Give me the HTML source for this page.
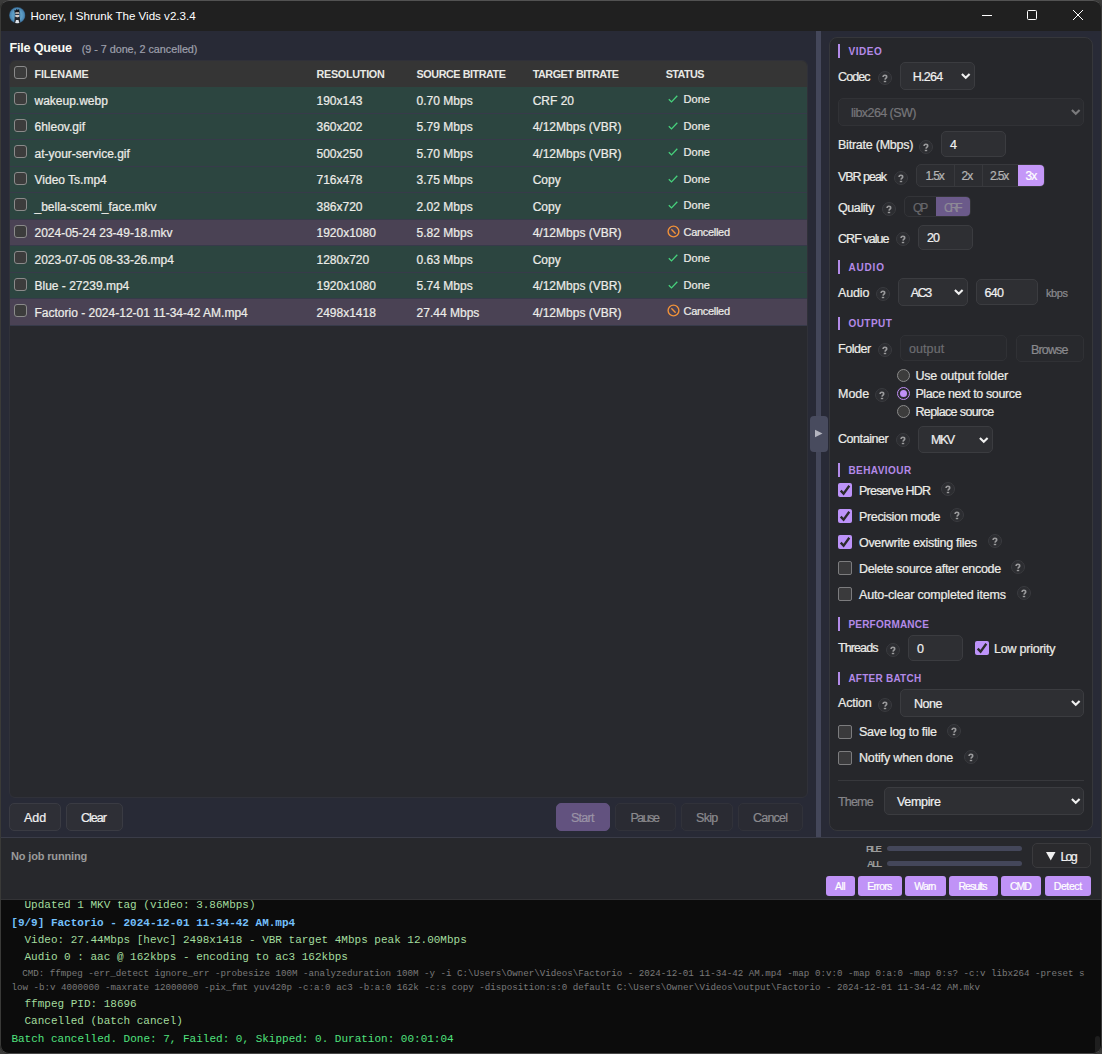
<!DOCTYPE html>
<html><head><meta charset="utf-8">
<style>
*{box-sizing:border-box;margin:0;padding:0}
html,body{width:1102px;height:1054px;overflow:hidden;background:#3b3b39;font-family:"Liberation Sans",sans-serif;}
.a{position:absolute}
.t{position:absolute;white-space:nowrap;line-height:1}
.s{-webkit-text-stroke:0.22px currentColor}
#win{position:absolute;left:0;top:0;width:1102px;height:1054px;background:#282a36}
#frame{position:absolute;left:0;top:0;width:1102px;height:1054px;border:1px solid #3a3a38;border-top-color:#525252;border-bottom-color:#474747;border-radius:9px;box-shadow:0 0 0 30px #3b3b3a;z-index:100;pointer-events:none}
.cb{position:absolute;width:13px;height:13px;border:1px solid #8a8a8a;border-radius:3px;background:#3c3c3c}
.q{position:absolute;width:14px;height:14px;border:1px solid #38393d;border-radius:50%;background:#2a2b2f;color:#8c8c8c;font-size:9px;font-weight:bold;display:flex;align-items:center;justify-content:center;line-height:1}
.box{position:absolute;border:1px solid #3b3c40;border-radius:5px;background:#2e2f33}
</style></head><body>
<div id="win">
<div class="a" style="left:0;top:0;width:1102px;height:31px;background:#202020"></div>
<svg class="a" style="left:9px;top:7px" width="16.5" height="16.5" viewBox="0 0 16 16"><defs><radialGradient id="ib" cx="50%" cy="50%" r="50%"><stop offset="0" stop-color="#3f7399"/><stop offset="0.55" stop-color="#5f9fc6"/><stop offset="0.85" stop-color="#4a86b2"/><stop offset="1" stop-color="#2a4a66"/></radialGradient><clipPath id="ic"><circle cx="8" cy="8" r="8"/></clipPath></defs><g clip-path="url(#ic)"><rect width="16" height="16" fill="url(#ib)"/><path d="M5.6 6L5.2 2.6L6.6 3.4L7.4 1.6L8.4 3L9.8 2L10.4 6Z" fill="#14161a"/><path d="M6.2 5.2H9.8V9.6L8 10.4L6.2 9.6Z" fill="#d9ccc4"/><rect x="5.9" y="6.6" width="4.2" height="1.1" fill="#1c2a3c"/><path d="M5.6 9.2L8 10.2L10.4 9.2L11 16H5Z" fill="#24262b"/><path d="M6.8 12.6H9.2L10.2 16H5.8Z" fill="#dfe4ea"/></g></svg>
<div class="t s" style="left:30.40px;top:10.28px;font-size:11.6px;color:#ffffff;font-weight:normal;letter-spacing:-0.013px;-webkit-text-stroke:0;">Honey, I Shrunk The Vids v2.3.4</div>
<div class="a" style="left:982px;top:15px;width:10px;height:1px;background:#fff"></div>
<div class="a" style="left:1027px;top:10px;width:10px;height:10px;border:1px solid #fff;border-radius:1.5px"></div>
<svg class="a" style="left:1072px;top:9px" width="12" height="12" viewBox="0 0 12 12"><path d="M1 1L11 11M11 1L1 11" stroke="#fff" stroke-width="1"/></svg>
<div class="t" style="left:9.40px;top:42.43px;font-size:12.6px;color:#f8f8f2;font-weight:bold;letter-spacing:-0.189px;">File Queue</div>
<div class="t s" style="left:81.70px;top:43.96px;font-size:10.8px;color:#9d9fab;font-weight:normal;letter-spacing:-0.029px;">(9 - 7 done, 2 cancelled)</div>
<div class="a" style="left:9px;top:60px;width:799px;height:738px;background:#28292e;border:1px solid #303139;border-radius:6px;overflow:hidden">
<div class="a" style="left:0;top:0;width:797px;height:26px;background:#353535"></div>
<div class="a" style="left:0;top:26px;width:797px;height:1px;background:#2a2a2a"></div>
</div>
<div class="cb" style="left:14px;top:66px"></div>
<div class="t" style="left:34.50px;top:68.96px;font-size:10.8px;color:#e8e8e4;font-weight:bold;letter-spacing:-0.143px;">FILENAME</div>
<div class="t" style="left:316.50px;top:68.96px;font-size:10.8px;color:#e8e8e4;font-weight:bold;letter-spacing:-0.278px;">RESOLUTION</div>
<div class="t" style="left:416.60px;top:68.96px;font-size:10.8px;color:#e8e8e4;font-weight:bold;letter-spacing:-0.446px;">SOURCE BITRATE</div>
<div class="t" style="left:532.70px;top:68.96px;font-size:10.8px;color:#e8e8e4;font-weight:bold;letter-spacing:-0.477px;">TARGET BITRATE</div>
<div class="t" style="left:665.70px;top:68.96px;font-size:10.8px;color:#e8e8e4;font-weight:bold;letter-spacing:-0.540px;">STATUS</div>
<div class="a" style="left:10px;top:87.0px;width:797px;height:26.5px;background:#2c4540;border-bottom:1px solid #373a4a"></div>
<div class="cb" style="left:14px;top:92.0px"></div>
<div class="t s" style="left:34.50px;top:94.94px;font-size:12px;color:#ecece8;font-weight:normal;">wakeup.webp</div>
<div class="t s" style="left:316.50px;top:94.94px;font-size:12px;color:#ecece8;font-weight:normal;">190x143</div>
<div class="t s" style="left:416.60px;top:94.94px;font-size:12px;color:#ecece8;font-weight:normal;">0.70 Mbps</div>
<div class="t s" style="left:532.70px;top:94.94px;font-size:12px;color:#ecece8;font-weight:normal;">CRF 20</div>
<svg class="a" style="left:668px;top:95.1px" width="10" height="8" viewBox="0 0 10 8"><path d="M0.8 4.2L3.5 6.9L9.3 0.8" fill="none" stroke="#47d27c" stroke-width="1.3"/></svg>
<div class="t s" style="left:683.60px;top:93.79px;font-size:11px;color:#ecece8;font-weight:normal;letter-spacing:0.000px;">Done</div>
<div class="a" style="left:10px;top:113.5px;width:797px;height:26.5px;background:#2c4540;border-bottom:1px solid #373a4a"></div>
<div class="cb" style="left:14px;top:118.5px"></div>
<div class="t s" style="left:34.50px;top:120.94px;font-size:12px;color:#ecece8;font-weight:normal;">6hleov.gif</div>
<div class="t s" style="left:316.50px;top:120.94px;font-size:12px;color:#ecece8;font-weight:normal;">360x202</div>
<div class="t s" style="left:416.60px;top:120.94px;font-size:12px;color:#ecece8;font-weight:normal;">5.79 Mbps</div>
<div class="t s" style="left:532.70px;top:120.94px;font-size:12px;color:#ecece8;font-weight:normal;">4/12Mbps (VBR)</div>
<svg class="a" style="left:668px;top:121.6px" width="10" height="8" viewBox="0 0 10 8"><path d="M0.8 4.2L3.5 6.9L9.3 0.8" fill="none" stroke="#47d27c" stroke-width="1.3"/></svg>
<div class="t s" style="left:683.60px;top:120.79px;font-size:11px;color:#ecece8;font-weight:normal;letter-spacing:0.000px;">Done</div>
<div class="a" style="left:10px;top:140.0px;width:797px;height:26.5px;background:#2c4540;border-bottom:1px solid #373a4a"></div>
<div class="cb" style="left:14px;top:145.0px"></div>
<div class="t s" style="left:34.50px;top:147.94px;font-size:12px;color:#ecece8;font-weight:normal;">at-your-service.gif</div>
<div class="t s" style="left:316.50px;top:147.94px;font-size:12px;color:#ecece8;font-weight:normal;">500x250</div>
<div class="t s" style="left:416.60px;top:147.94px;font-size:12px;color:#ecece8;font-weight:normal;">5.70 Mbps</div>
<div class="t s" style="left:532.70px;top:147.94px;font-size:12px;color:#ecece8;font-weight:normal;">4/12Mbps (VBR)</div>
<svg class="a" style="left:668px;top:148.1px" width="10" height="8" viewBox="0 0 10 8"><path d="M0.8 4.2L3.5 6.9L9.3 0.8" fill="none" stroke="#47d27c" stroke-width="1.3"/></svg>
<div class="t s" style="left:683.60px;top:146.79px;font-size:11px;color:#ecece8;font-weight:normal;letter-spacing:0.000px;">Done</div>
<div class="a" style="left:10px;top:166.5px;width:797px;height:26.5px;background:#2c4540;border-bottom:1px solid #373a4a"></div>
<div class="cb" style="left:14px;top:171.5px"></div>
<div class="t s" style="left:34.50px;top:173.94px;font-size:12px;color:#ecece8;font-weight:normal;">Video Ts.mp4</div>
<div class="t s" style="left:316.50px;top:173.94px;font-size:12px;color:#ecece8;font-weight:normal;">716x478</div>
<div class="t s" style="left:416.60px;top:173.94px;font-size:12px;color:#ecece8;font-weight:normal;">3.75 Mbps</div>
<div class="t s" style="left:532.70px;top:173.94px;font-size:12px;color:#ecece8;font-weight:normal;">Copy</div>
<svg class="a" style="left:668px;top:174.6px" width="10" height="8" viewBox="0 0 10 8"><path d="M0.8 4.2L3.5 6.9L9.3 0.8" fill="none" stroke="#47d27c" stroke-width="1.3"/></svg>
<div class="t s" style="left:683.60px;top:173.79px;font-size:11px;color:#ecece8;font-weight:normal;letter-spacing:0.000px;">Done</div>
<div class="a" style="left:10px;top:193.0px;width:797px;height:26.5px;background:#2c4540;border-bottom:1px solid #373a4a"></div>
<div class="cb" style="left:14px;top:198.0px"></div>
<div class="t s" style="left:34.50px;top:200.94px;font-size:12px;color:#ecece8;font-weight:normal;">_bella-scemi_face.mkv</div>
<div class="t s" style="left:316.50px;top:200.94px;font-size:12px;color:#ecece8;font-weight:normal;">386x720</div>
<div class="t s" style="left:416.60px;top:200.94px;font-size:12px;color:#ecece8;font-weight:normal;">2.02 Mbps</div>
<div class="t s" style="left:532.70px;top:200.94px;font-size:12px;color:#ecece8;font-weight:normal;">Copy</div>
<svg class="a" style="left:668px;top:201.1px" width="10" height="8" viewBox="0 0 10 8"><path d="M0.8 4.2L3.5 6.9L9.3 0.8" fill="none" stroke="#47d27c" stroke-width="1.3"/></svg>
<div class="t s" style="left:683.60px;top:199.79px;font-size:11px;color:#ecece8;font-weight:normal;letter-spacing:0.000px;">Done</div>
<div class="a" style="left:10px;top:219.5px;width:797px;height:26.5px;background:#4a4254;border-bottom:1px solid #373a4a"></div>
<div class="cb" style="left:14px;top:224.5px"></div>
<div class="t s" style="left:34.50px;top:226.94px;font-size:12px;color:#ecece8;font-weight:normal;">2024-05-24 23-49-18.mkv</div>
<div class="t s" style="left:316.50px;top:226.94px;font-size:12px;color:#ecece8;font-weight:normal;">1920x1080</div>
<div class="t s" style="left:416.60px;top:226.94px;font-size:12px;color:#ecece8;font-weight:normal;">5.82 Mbps</div>
<div class="t s" style="left:532.70px;top:226.94px;font-size:12px;color:#ecece8;font-weight:normal;">4/12Mbps (VBR)</div>
<svg class="a" style="left:666.5px;top:224.6px" width="13" height="13" viewBox="0 0 13 13"><circle cx="6.5" cy="6.5" r="5.4" fill="none" stroke="#f0923a" stroke-width="1.4"/><path d="M4.8 4.8L8.2 8.2" stroke="#f0923a" stroke-width="1.4" stroke-linecap="round"/></svg>
<div class="t s" style="left:683.60px;top:226.79px;font-size:11px;color:#ecece8;font-weight:normal;letter-spacing:-0.312px;">Cancelled</div>
<div class="a" style="left:10px;top:246.0px;width:797px;height:26.5px;background:#2c4540;border-bottom:1px solid #373a4a"></div>
<div class="cb" style="left:14px;top:251.0px"></div>
<div class="t s" style="left:34.50px;top:253.94px;font-size:12px;color:#ecece8;font-weight:normal;">2023-07-05 08-33-26.mp4</div>
<div class="t s" style="left:316.50px;top:253.94px;font-size:12px;color:#ecece8;font-weight:normal;">1280x720</div>
<div class="t s" style="left:416.60px;top:253.94px;font-size:12px;color:#ecece8;font-weight:normal;">0.63 Mbps</div>
<div class="t s" style="left:532.70px;top:253.94px;font-size:12px;color:#ecece8;font-weight:normal;">Copy</div>
<svg class="a" style="left:668px;top:254.1px" width="10" height="8" viewBox="0 0 10 8"><path d="M0.8 4.2L3.5 6.9L9.3 0.8" fill="none" stroke="#47d27c" stroke-width="1.3"/></svg>
<div class="t s" style="left:683.60px;top:252.79px;font-size:11px;color:#ecece8;font-weight:normal;letter-spacing:0.000px;">Done</div>
<div class="a" style="left:10px;top:272.5px;width:797px;height:26.5px;background:#2c4540;border-bottom:1px solid #373a4a"></div>
<div class="cb" style="left:14px;top:277.5px"></div>
<div class="t s" style="left:34.50px;top:279.94px;font-size:12px;color:#ecece8;font-weight:normal;">Blue - 27239.mp4</div>
<div class="t s" style="left:316.50px;top:279.94px;font-size:12px;color:#ecece8;font-weight:normal;">1920x1080</div>
<div class="t s" style="left:416.60px;top:279.94px;font-size:12px;color:#ecece8;font-weight:normal;">5.74 Mbps</div>
<div class="t s" style="left:532.70px;top:279.94px;font-size:12px;color:#ecece8;font-weight:normal;">4/12Mbps (VBR)</div>
<svg class="a" style="left:668px;top:280.6px" width="10" height="8" viewBox="0 0 10 8"><path d="M0.8 4.2L3.5 6.9L9.3 0.8" fill="none" stroke="#47d27c" stroke-width="1.3"/></svg>
<div class="t s" style="left:683.60px;top:279.79px;font-size:11px;color:#ecece8;font-weight:normal;letter-spacing:0.000px;">Done</div>
<div class="a" style="left:10px;top:299.0px;width:797px;height:26.5px;background:#4a4254;border-bottom:1px solid #373a4a"></div>
<div class="cb" style="left:14px;top:304.0px"></div>
<div class="t s" style="left:34.50px;top:306.94px;font-size:12px;color:#ecece8;font-weight:normal;">Factorio - 2024-12-01 11-34-42 AM.mp4</div>
<div class="t s" style="left:316.50px;top:306.94px;font-size:12px;color:#ecece8;font-weight:normal;">2498x1418</div>
<div class="t s" style="left:416.60px;top:306.94px;font-size:12px;color:#ecece8;font-weight:normal;">27.44 Mbps</div>
<div class="t s" style="left:532.70px;top:306.94px;font-size:12px;color:#ecece8;font-weight:normal;">4/12Mbps (VBR)</div>
<svg class="a" style="left:666.5px;top:304.1px" width="13" height="13" viewBox="0 0 13 13"><circle cx="6.5" cy="6.5" r="5.4" fill="none" stroke="#f0923a" stroke-width="1.4"/><path d="M4.8 4.8L8.2 8.2" stroke="#f0923a" stroke-width="1.4" stroke-linecap="round"/></svg>
<div class="t s" style="left:683.60px;top:305.79px;font-size:11px;color:#ecece8;font-weight:normal;letter-spacing:-0.312px;">Cancelled</div>
<div class="a" style="left:9px;top:803px;width:52px;height:28px;background:#2e2f36;border:1px solid #3a3b43;border-radius:5px"></div>
<div class="t s" style="left:24.00px;top:811.52px;font-size:12.5px;color:#f0f0f0;font-weight:normal;letter-spacing:0.000px;">Add</div>
<div class="a" style="left:66px;top:803px;width:57px;height:28px;background:#2e2f36;border:1px solid #3a3b43;border-radius:5px"></div>
<div class="t s" style="left:81.00px;top:811.52px;font-size:12.5px;color:#f0f0f0;font-weight:normal;letter-spacing:-1.000px;">Clear</div>
<div class="a" style="left:556px;top:803px;width:54px;height:28px;background:#62527f;border:1px solid #62527f;border-radius:5px"></div>
<div class="t s" style="left:571.00px;top:811.52px;font-size:12.5px;color:#9a93a6;font-weight:normal;letter-spacing:-0.750px;">Start</div>
<div class="a" style="left:615px;top:803px;width:61px;height:28px;background:#2a2b33;border:1px solid #31323a;border-radius:5px"></div>
<div class="t s" style="left:630.50px;top:811.52px;font-size:12.5px;color:#8a8a8e;font-weight:normal;letter-spacing:-1.500px;">Pause</div>
<div class="a" style="left:681px;top:803px;width:52px;height:28px;background:#2a2b33;border:1px solid #31323a;border-radius:5px"></div>
<div class="t s" style="left:696.00px;top:811.52px;font-size:12.5px;color:#8a8a8e;font-weight:normal;letter-spacing:-0.667px;">Skip</div>
<div class="a" style="left:738px;top:803px;width:65px;height:28px;background:#2a2b33;border:1px solid #31323a;border-radius:5px"></div>
<div class="t s" style="left:753.00px;top:811.52px;font-size:12.5px;color:#8a8a8e;font-weight:normal;letter-spacing:-0.800px;">Cancel</div>
<div class="a" style="left:816px;top:31px;width:5px;height:806px;background:#44475a"></div>
<div class="a" style="left:810px;top:416px;width:18px;height:36px;background:#484b5e;border-radius:4px"></div>
<svg class="a" style="left:814px;top:428px" width="10" height="11" viewBox="0 0 10 11"><path d="M1 1.8L8.5 5.5L1 9.2Z" fill="#b4b5c0"/></svg>
<div class="a" style="left:829px;top:37px;width:264px;height:794px;background:#26272b;border:1px solid #36373b;border-radius:8px"></div>
<div class="a" style="left:838px;top:44px;width:2px;height:14px;background:#b38be9"></div>
<div class="t" style="left:848.40px;top:46.64px;font-size:10px;color:#b48ae8;font-weight:bold;letter-spacing:0.575px;">VIDEO</div>
<div class="t s" style="left:838.00px;top:70.52px;font-size:12.5px;color:#ecece8;font-weight:normal;letter-spacing:-0.900px;">Codec</div>
<svg class="a" style="left:878px;top:71px" width="14" height="14" viewBox="0 0 14 14"><circle cx="7" cy="7" r="6.5" fill="#2c2d31" stroke="#3a3b3f" stroke-width="1"/><path d="M5.1 6C5.1 4.8 5.9 4.3 6.9 4.3C8 4.3 8.7 5 8.7 5.9C8.7 7.1 7.2 7.2 7 8.7" fill="none" stroke="#9a9a9c" stroke-width="1.6"/><rect x="5.8" y="9.8" width="2.4" height="1.4" fill="#9a9a9c"/></svg>
<div class="box" style="left:900px;top:62px;width:75px;height:28px;"></div>
<div class="t s" style="left:912.80px;top:70.52px;font-size:12.5px;color:#f0f0f0;font-weight:normal;letter-spacing:-0.750px;">H.264</div>
<svg class="a" style="left:960px;top:72px" width="11.5" height="7.6" viewBox="-1 -1 11.5 7.6"><path d="M0.9 0.9L4.75 4.699999999999999L8.6 0.9" fill="none" stroke="#f0f0f0" stroke-width="2.1" stroke-linecap="butt" stroke-linejoin="miter"/></svg>
<div class="box" style="left:838px;top:98px;width:246px;height:28px;background:#2a2b2f;border-color:#313236"></div>
<div class="t s" style="left:851.00px;top:106.52px;font-size:12.5px;color:#76767a;font-weight:normal;letter-spacing:-0.564px;">libx264 (SW)</div>
<svg class="a" style="left:1069.5px;top:108px" width="11.5" height="7.6" viewBox="-1 -1 11.5 7.6"><path d="M0.9 0.9L4.75 4.699999999999999L8.6 0.9" fill="none" stroke="#7a7a7c" stroke-width="2.1" stroke-linecap="butt" stroke-linejoin="miter"/></svg>
<div class="t s" style="left:838.00px;top:138.52px;font-size:12.5px;color:#ecece8;font-weight:normal;letter-spacing:-0.231px;">Bitrate (Mbps)</div>
<svg class="a" style="left:919px;top:140px" width="14" height="14" viewBox="0 0 14 14"><circle cx="7" cy="7" r="6.5" fill="#2c2d31" stroke="#3a3b3f" stroke-width="1"/><path d="M5.1 6C5.1 4.8 5.9 4.3 6.9 4.3C8 4.3 8.7 5 8.7 5.9C8.7 7.1 7.2 7.2 7 8.7" fill="none" stroke="#9a9a9c" stroke-width="1.6"/><rect x="5.8" y="9.8" width="2.4" height="1.4" fill="#9a9a9c"/></svg>
<div class="box" style="left:941px;top:131px;width:65px;height:26px;"></div>
<div class="t s" style="left:950.00px;top:138.52px;font-size:12.5px;color:#f0f0f0;font-weight:normal;">4</div>
<div class="t s" style="left:838.00px;top:170.52px;font-size:12.5px;color:#ecece8;font-weight:normal;letter-spacing:-1.029px;">VBR peak</div>
<svg class="a" style="left:894px;top:171px" width="14" height="14" viewBox="0 0 14 14"><circle cx="7" cy="7" r="6.5" fill="#2c2d31" stroke="#3a3b3f" stroke-width="1"/><path d="M5.1 6C5.1 4.8 5.9 4.3 6.9 4.3C8 4.3 8.7 5 8.7 5.9C8.7 7.1 7.2 7.2 7 8.7" fill="none" stroke="#9a9a9c" stroke-width="1.6"/><rect x="5.8" y="9.8" width="2.4" height="1.4" fill="#9a9a9c"/></svg>
<div class="box" style="left:916px;top:164px;width:129px;height:22.5px;background:#2c2d31;border-color:#38393d;overflow:hidden"><div class="a" style="left:36.5px;top:0;width:1px;height:22px;background:#38393d"></div><div class="a" style="left:64.5px;top:0;width:1px;height:22px;background:#38393d"></div><div class="a" style="left:101px;top:-1px;width:28px;height:24px;background:#c497f8;border-radius:0 5px 5px 0"></div></div>
<div class="t s" style="left:925.50px;top:169.94px;font-size:12px;color:#b4b4b4;font-weight:normal;letter-spacing:-1.167px;">1.5x</div>
<div class="t s" style="left:961.50px;top:169.94px;font-size:12px;color:#b4b4b4;font-weight:normal;letter-spacing:-1.000px;">2x</div>
<div class="t s" style="left:990.00px;top:169.94px;font-size:12px;color:#b4b4b4;font-weight:normal;letter-spacing:-1.167px;">2.5x</div>
<div class="t s" style="left:1025.50px;top:169.94px;font-size:12px;color:#ffffff;font-weight:normal;letter-spacing:-1.000px;">3x</div>
<div class="t s" style="left:838.00px;top:201.52px;font-size:12.5px;color:#ecece8;font-weight:normal;letter-spacing:-0.417px;">Quality</div>
<svg class="a" style="left:882px;top:202px" width="14" height="14" viewBox="0 0 14 14"><circle cx="7" cy="7" r="6.5" fill="#2c2d31" stroke="#3a3b3f" stroke-width="1"/><path d="M5.1 6C5.1 4.8 5.9 4.3 6.9 4.3C8 4.3 8.7 5 8.7 5.9C8.7 7.1 7.2 7.2 7 8.7" fill="none" stroke="#9a9a9c" stroke-width="1.6"/><rect x="5.8" y="9.8" width="2.4" height="1.4" fill="#9a9a9c"/></svg>
<div class="box" style="left:904px;top:195.5px;width:67px;height:21.5px;background:#27282c;border-color:#333438;overflow:hidden"><div class="a" style="left:31px;top:-1px;width:36px;height:23px;background:#6b5a8a"></div></div>
<div class="t s" style="left:913.00px;top:201.94px;font-size:12px;color:#67676b;font-weight:normal;letter-spacing:-2.000px;">QP</div>
<div class="t s" style="left:944.00px;top:201.94px;font-size:12px;color:#8e8a96;font-weight:normal;letter-spacing:-3.000px;">CRF</div>
<div class="t s" style="left:838.00px;top:232.52px;font-size:12.5px;color:#ecece8;font-weight:normal;letter-spacing:-0.938px;">CRF value</div>
<svg class="a" style="left:896px;top:232px" width="14" height="14" viewBox="0 0 14 14"><circle cx="7" cy="7" r="6.5" fill="#2c2d31" stroke="#3a3b3f" stroke-width="1"/><path d="M5.1 6C5.1 4.8 5.9 4.3 6.9 4.3C8 4.3 8.7 5 8.7 5.9C8.7 7.1 7.2 7.2 7 8.7" fill="none" stroke="#9a9a9c" stroke-width="1.6"/><rect x="5.8" y="9.8" width="2.4" height="1.4" fill="#9a9a9c"/></svg>
<div class="box" style="left:918px;top:224.5px;width:55px;height:25.0px;"></div>
<div class="t s" style="left:927.00px;top:231.52px;font-size:12.5px;color:#f0f0f0;font-weight:normal;letter-spacing:-1.000px;">20</div>
<div class="a" style="left:838px;top:260px;width:2px;height:13.5px;background:#b38be9"></div>
<div class="t" style="left:848.40px;top:262.64px;font-size:10px;color:#b48ae8;font-weight:bold;letter-spacing:0.850px;">AUDIO</div>
<div class="t s" style="left:838.00px;top:286.52px;font-size:12.5px;color:#ecece8;font-weight:normal;letter-spacing:-0.150px;">Audio</div>
<svg class="a" style="left:876px;top:287px" width="14" height="14" viewBox="0 0 14 14"><circle cx="7" cy="7" r="6.5" fill="#2c2d31" stroke="#3a3b3f" stroke-width="1"/><path d="M5.1 6C5.1 4.8 5.9 4.3 6.9 4.3C8 4.3 8.7 5 8.7 5.9C8.7 7.1 7.2 7.2 7 8.7" fill="none" stroke="#9a9a9c" stroke-width="1.6"/><rect x="5.8" y="9.8" width="2.4" height="1.4" fill="#9a9a9c"/></svg>
<div class="box" style="left:898px;top:278px;width:70px;height:28px;"></div>
<div class="t s" style="left:910.70px;top:286.52px;font-size:12.5px;color:#f0f0f0;font-weight:normal;letter-spacing:-1.350px;">AC3</div>
<svg class="a" style="left:953px;top:288px" width="11.5" height="7.6" viewBox="-1 -1 11.5 7.6"><path d="M0.9 0.9L4.75 4.699999999999999L8.6 0.9" fill="none" stroke="#f0f0f0" stroke-width="2.1" stroke-linecap="butt" stroke-linejoin="miter"/></svg>
<div class="box" style="left:976px;top:278.5px;width:62px;height:26.0px;"></div>
<div class="t s" style="left:984.50px;top:286.52px;font-size:12.5px;color:#f0f0f0;font-weight:normal;letter-spacing:-0.750px;">640</div>
<div class="t s" style="left:1046.00px;top:287.79px;font-size:11px;color:#8a8a8e;font-weight:normal;letter-spacing:-0.400px;">kbps</div>
<div class="a" style="left:838px;top:317px;width:2px;height:13px;background:#b38be9"></div>
<div class="t" style="left:848.40px;top:318.64px;font-size:10px;color:#b48ae8;font-weight:bold;letter-spacing:0.480px;">OUTPUT</div>
<div class="t s" style="left:838.00px;top:342.52px;font-size:12.5px;color:#ecece8;font-weight:normal;letter-spacing:-0.440px;">Folder</div>
<svg class="a" style="left:878px;top:343px" width="14" height="14" viewBox="0 0 14 14"><circle cx="7" cy="7" r="6.5" fill="#2c2d31" stroke="#3a3b3f" stroke-width="1"/><path d="M5.1 6C5.1 4.8 5.9 4.3 6.9 4.3C8 4.3 8.7 5 8.7 5.9C8.7 7.1 7.2 7.2 7 8.7" fill="none" stroke="#9a9a9c" stroke-width="1.6"/><rect x="5.8" y="9.8" width="2.4" height="1.4" fill="#9a9a9c"/></svg>
<div class="box" style="left:900px;top:335px;width:107px;height:25.5px;background:#28292d;border-color:#303135"></div>
<div class="t s" style="left:909.00px;top:342.52px;font-size:12.5px;color:#6c6c70;font-weight:normal;letter-spacing:0.080px;">output</div>
<div class="box" style="left:1016px;top:335px;width:68px;height:27px;background:#28292d;border-color:#303135"></div>
<div class="t s" style="left:1031.00px;top:343.52px;font-size:12.5px;color:#8a8a8e;font-weight:normal;letter-spacing:-0.840px;">Browse</div>
<div class="t s" style="left:838.00px;top:387.52px;font-size:12.5px;color:#ecece8;font-weight:normal;letter-spacing:0.000px;">Mode</div>
<svg class="a" style="left:875px;top:388px" width="14" height="14" viewBox="0 0 14 14"><circle cx="7" cy="7" r="6.5" fill="#2c2d31" stroke="#3a3b3f" stroke-width="1"/><path d="M5.1 6C5.1 4.8 5.9 4.3 6.9 4.3C8 4.3 8.7 5 8.7 5.9C8.7 7.1 7.2 7.2 7 8.7" fill="none" stroke="#9a9a9c" stroke-width="1.6"/><rect x="5.8" y="9.8" width="2.4" height="1.4" fill="#9a9a9c"/></svg>
<div class="a" style="left:897px;top:369px;width:13px;height:13px;border-radius:50%;border:1px solid #8a8a8a;background:#3c3c3c"></div>
<div class="t s" style="left:915.40px;top:369.52px;font-size:12.5px;color:#ecece8;font-weight:normal;letter-spacing:-0.156px;">Use output folder</div>
<div class="a" style="left:897px;top:387px;width:13px;height:13px;border-radius:50%;border:1px solid #c08ef7;background:#2a2a2e"></div>
<div class="a" style="left:900px;top:390px;width:7px;height:7px;border-radius:50%;background:#c090f8"></div>
<div class="t s" style="left:915.40px;top:387.52px;font-size:12.5px;color:#ecece8;font-weight:normal;letter-spacing:-0.368px;">Place next to source</div>
<div class="a" style="left:897px;top:405px;width:13px;height:13px;border-radius:50%;border:1px solid #8a8a8a;background:#3c3c3c"></div>
<div class="t s" style="left:915.40px;top:405.52px;font-size:12.5px;color:#ecece8;font-weight:normal;letter-spacing:-0.615px;">Replace source</div>
<div class="t s" style="left:838.00px;top:432.52px;font-size:12.5px;color:#ecece8;font-weight:normal;letter-spacing:-0.438px;">Container</div>
<svg class="a" style="left:896px;top:433px" width="14" height="14" viewBox="0 0 14 14"><circle cx="7" cy="7" r="6.5" fill="#2c2d31" stroke="#3a3b3f" stroke-width="1"/><path d="M5.1 6C5.1 4.8 5.9 4.3 6.9 4.3C8 4.3 8.7 5 8.7 5.9C8.7 7.1 7.2 7.2 7 8.7" fill="none" stroke="#9a9a9c" stroke-width="1.6"/><rect x="5.8" y="9.8" width="2.4" height="1.4" fill="#9a9a9c"/></svg>
<div class="box" style="left:918px;top:425.5px;width:75px;height:27.0px;"></div>
<div class="t s" style="left:931.00px;top:433.52px;font-size:12.5px;color:#f0f0f0;font-weight:normal;letter-spacing:-1.500px;">MKV</div>
<svg class="a" style="left:978px;top:436px" width="11.5" height="7.6" viewBox="-1 -1 11.5 7.6"><path d="M0.9 0.9L4.75 4.699999999999999L8.6 0.9" fill="none" stroke="#f0f0f0" stroke-width="2.1" stroke-linecap="butt" stroke-linejoin="miter"/></svg>
<div class="a" style="left:838px;top:463px;width:2px;height:14px;background:#b38be9"></div>
<div class="t" style="left:848.40px;top:465.64px;font-size:10px;color:#b48ae8;font-weight:bold;letter-spacing:0.438px;">BEHAVIOUR</div>
<div class="a" style="left:838px;top:483px;width:14px;height:14px;border-radius:2px;background:#bd93f9"></div>
<svg class="a" style="left:838px;top:483px" width="14" height="14" viewBox="0 0 14 14"><path d="M2.7 7.6L5.6 10.6L11.3 2.8" fill="none" stroke="#2b2b2b" stroke-width="2.3"/></svg>
<div class="t s" style="left:859.00px;top:484.52px;font-size:12.5px;color:#ecece8;font-weight:normal;letter-spacing:-0.773px;">Preserve HDR</div>
<svg class="a" style="left:941px;top:481.5px" width="14" height="14" viewBox="0 0 14 14"><circle cx="7" cy="7" r="6.5" fill="#2c2d31" stroke="#3a3b3f" stroke-width="1"/><path d="M5.1 6C5.1 4.8 5.9 4.3 6.9 4.3C8 4.3 8.7 5 8.7 5.9C8.7 7.1 7.2 7.2 7 8.7" fill="none" stroke="#9a9a9c" stroke-width="1.6"/><rect x="5.8" y="9.8" width="2.4" height="1.4" fill="#9a9a9c"/></svg>
<div class="a" style="left:838px;top:509px;width:14px;height:14px;border-radius:2px;background:#bd93f9"></div>
<svg class="a" style="left:838px;top:509px" width="14" height="14" viewBox="0 0 14 14"><path d="M2.7 7.6L5.6 10.6L11.3 2.8" fill="none" stroke="#2b2b2b" stroke-width="2.3"/></svg>
<div class="t s" style="left:859.00px;top:510.52px;font-size:12.5px;color:#ecece8;font-weight:normal;letter-spacing:-0.354px;">Precision mode</div>
<svg class="a" style="left:950px;top:507.5px" width="14" height="14" viewBox="0 0 14 14"><circle cx="7" cy="7" r="6.5" fill="#2c2d31" stroke="#3a3b3f" stroke-width="1"/><path d="M5.1 6C5.1 4.8 5.9 4.3 6.9 4.3C8 4.3 8.7 5 8.7 5.9C8.7 7.1 7.2 7.2 7 8.7" fill="none" stroke="#9a9a9c" stroke-width="1.6"/><rect x="5.8" y="9.8" width="2.4" height="1.4" fill="#9a9a9c"/></svg>
<div class="a" style="left:838px;top:535px;width:14px;height:14px;border-radius:2px;background:#bd93f9"></div>
<svg class="a" style="left:838px;top:535px" width="14" height="14" viewBox="0 0 14 14"><path d="M2.7 7.6L5.6 10.6L11.3 2.8" fill="none" stroke="#2b2b2b" stroke-width="2.3"/></svg>
<div class="t s" style="left:859.00px;top:536.52px;font-size:12.5px;color:#ecece8;font-weight:normal;letter-spacing:-0.304px;">Overwrite existing files</div>
<svg class="a" style="left:987.5px;top:533.5px" width="14" height="14" viewBox="0 0 14 14"><circle cx="7" cy="7" r="6.5" fill="#2c2d31" stroke="#3a3b3f" stroke-width="1"/><path d="M5.1 6C5.1 4.8 5.9 4.3 6.9 4.3C8 4.3 8.7 5 8.7 5.9C8.7 7.1 7.2 7.2 7 8.7" fill="none" stroke="#9a9a9c" stroke-width="1.6"/><rect x="5.8" y="9.8" width="2.4" height="1.4" fill="#9a9a9c"/></svg>
<div class="a" style="left:838px;top:561px;width:14px;height:14px;border-radius:2px;background:#3a3a3c;border:1px solid #7c7c7e"></div>
<div class="t s" style="left:859.00px;top:562.52px;font-size:12.5px;color:#ecece8;font-weight:normal;letter-spacing:-0.320px;">Delete source after encode</div>
<svg class="a" style="left:1011px;top:559.5px" width="14" height="14" viewBox="0 0 14 14"><circle cx="7" cy="7" r="6.5" fill="#2c2d31" stroke="#3a3b3f" stroke-width="1"/><path d="M5.1 6C5.1 4.8 5.9 4.3 6.9 4.3C8 4.3 8.7 5 8.7 5.9C8.7 7.1 7.2 7.2 7 8.7" fill="none" stroke="#9a9a9c" stroke-width="1.6"/><rect x="5.8" y="9.8" width="2.4" height="1.4" fill="#9a9a9c"/></svg>
<div class="a" style="left:838px;top:587px;width:14px;height:14px;border-radius:2px;background:#3a3a3c;border:1px solid #7c7c7e"></div>
<div class="t s" style="left:859.00px;top:588.52px;font-size:12.5px;color:#ecece8;font-weight:normal;letter-spacing:-0.180px;">Auto-clear completed items</div>
<svg class="a" style="left:1016.5px;top:585.5px" width="14" height="14" viewBox="0 0 14 14"><circle cx="7" cy="7" r="6.5" fill="#2c2d31" stroke="#3a3b3f" stroke-width="1"/><path d="M5.1 6C5.1 4.8 5.9 4.3 6.9 4.3C8 4.3 8.7 5 8.7 5.9C8.7 7.1 7.2 7.2 7 8.7" fill="none" stroke="#9a9a9c" stroke-width="1.6"/><rect x="5.8" y="9.8" width="2.4" height="1.4" fill="#9a9a9c"/></svg>
<div class="a" style="left:838px;top:617px;width:2px;height:13.5px;background:#b38be9"></div>
<div class="t" style="left:848.40px;top:619.63px;font-size:10px;color:#b48ae8;font-weight:bold;letter-spacing:0.220px;">PERFORMANCE</div>
<div class="t s" style="left:838.00px;top:641.52px;font-size:12.5px;color:#ecece8;font-weight:normal;letter-spacing:-0.900px;">Threads</div>
<svg class="a" style="left:886px;top:643px" width="14" height="14" viewBox="0 0 14 14"><circle cx="7" cy="7" r="6.5" fill="#2c2d31" stroke="#3a3b3f" stroke-width="1"/><path d="M5.1 6C5.1 4.8 5.9 4.3 6.9 4.3C8 4.3 8.7 5 8.7 5.9C8.7 7.1 7.2 7.2 7 8.7" fill="none" stroke="#9a9a9c" stroke-width="1.6"/><rect x="5.8" y="9.8" width="2.4" height="1.4" fill="#9a9a9c"/></svg>
<div class="box" style="left:908px;top:635px;width:55px;height:26px;"></div>
<div class="t s" style="left:917.00px;top:642.52px;font-size:12.5px;color:#f0f0f0;font-weight:normal;">0</div>
<div class="a" style="left:975px;top:641px;width:14px;height:14px;border-radius:2px;background:#bd93f9"></div>
<svg class="a" style="left:975px;top:641px" width="14" height="14" viewBox="0 0 14 14"><path d="M2.7 7.6L5.6 10.6L11.3 2.8" fill="none" stroke="#2b2b2b" stroke-width="2.3"/></svg>
<div class="t s" style="left:994.00px;top:642.52px;font-size:12.5px;color:#ecece8;font-weight:normal;letter-spacing:-0.227px;">Low priority</div>
<div class="a" style="left:838px;top:671.5px;width:2px;height:13.5px;background:#b38be9"></div>
<div class="t" style="left:848.40px;top:673.63px;font-size:10px;color:#b48ae8;font-weight:bold;letter-spacing:0.240px;">AFTER BATCH</div>
<div class="t s" style="left:838.00px;top:696.52px;font-size:12.5px;color:#ecece8;font-weight:normal;letter-spacing:-0.200px;">Action</div>
<svg class="a" style="left:878px;top:697.5px" width="14" height="14" viewBox="0 0 14 14"><circle cx="7" cy="7" r="6.5" fill="#2c2d31" stroke="#3a3b3f" stroke-width="1"/><path d="M5.1 6C5.1 4.8 5.9 4.3 6.9 4.3C8 4.3 8.7 5 8.7 5.9C8.7 7.1 7.2 7.2 7 8.7" fill="none" stroke="#9a9a9c" stroke-width="1.6"/><rect x="5.8" y="9.8" width="2.4" height="1.4" fill="#9a9a9c"/></svg>
<div class="box" style="left:900px;top:689px;width:184px;height:28px;"></div>
<div class="t s" style="left:914.00px;top:697.52px;font-size:12.5px;color:#f0f0f0;font-weight:normal;letter-spacing:-0.500px;">None</div>
<svg class="a" style="left:1069.5px;top:699px" width="11.5" height="7.6" viewBox="-1 -1 11.5 7.6"><path d="M0.9 0.9L4.75 4.699999999999999L8.6 0.9" fill="none" stroke="#f0f0f0" stroke-width="2.1" stroke-linecap="butt" stroke-linejoin="miter"/></svg>
<div class="a" style="left:838px;top:724.5px;width:14px;height:14px;border-radius:2px;background:#3a3a3c;border:1px solid #7c7c7e"></div>
<div class="t s" style="left:859.00px;top:725.52px;font-size:12.5px;color:#ecece8;font-weight:normal;letter-spacing:-0.267px;">Save log to file</div>
<svg class="a" style="left:947px;top:724.0px" width="14" height="14" viewBox="0 0 14 14"><circle cx="7" cy="7" r="6.5" fill="#2c2d31" stroke="#3a3b3f" stroke-width="1"/><path d="M5.1 6C5.1 4.8 5.9 4.3 6.9 4.3C8 4.3 8.7 5 8.7 5.9C8.7 7.1 7.2 7.2 7 8.7" fill="none" stroke="#9a9a9c" stroke-width="1.6"/><rect x="5.8" y="9.8" width="2.4" height="1.4" fill="#9a9a9c"/></svg>
<div class="a" style="left:838px;top:750.5px;width:14px;height:14px;border-radius:2px;background:#3a3a3c;border:1px solid #7c7c7e"></div>
<div class="t s" style="left:859.00px;top:751.52px;font-size:12.5px;color:#ecece8;font-weight:normal;letter-spacing:-0.160px;">Notify when done</div>
<svg class="a" style="left:964px;top:750.0px" width="14" height="14" viewBox="0 0 14 14"><circle cx="7" cy="7" r="6.5" fill="#2c2d31" stroke="#3a3b3f" stroke-width="1"/><path d="M5.1 6C5.1 4.8 5.9 4.3 6.9 4.3C8 4.3 8.7 5 8.7 5.9C8.7 7.1 7.2 7.2 7 8.7" fill="none" stroke="#9a9a9c" stroke-width="1.6"/><rect x="5.8" y="9.8" width="2.4" height="1.4" fill="#9a9a9c"/></svg>
<div class="a" style="left:838px;top:780px;width:246px;height:1px;background:#37383c"></div>
<div class="t s" style="left:838.00px;top:795.52px;font-size:12.5px;color:#858589;font-weight:normal;letter-spacing:-0.825px;">Theme</div>
<div class="box" style="left:884px;top:787px;width:200px;height:28px;"></div>
<div class="t s" style="left:897.00px;top:795.52px;font-size:12.5px;color:#f0f0f0;font-weight:normal;letter-spacing:-0.333px;">Vempire</div>
<svg class="a" style="left:1069.5px;top:797px" width="11.5" height="7.6" viewBox="-1 -1 11.5 7.6"><path d="M0.9 0.9L4.75 4.699999999999999L8.6 0.9" fill="none" stroke="#f0f0f0" stroke-width="2.1" stroke-linecap="butt" stroke-linejoin="miter"/></svg>
<div class="a" style="left:0;top:837px;width:1102px;height:63px;background:#27282c;border-top:1px solid #3a3c48"></div>
<div class="t" style="left:11.00px;top:850.79px;font-size:11px;color:#9a9a9a;font-weight:bold;letter-spacing:-0.154px;">No job running</div>
<div class="t" style="left:866.00px;top:843.97px;font-size:9.6px;color:#9c9c9c;font-weight:bold;letter-spacing:-1.667px;">FILE</div>
<div class="t" style="left:867.00px;top:858.97px;font-size:9.6px;color:#9c9c9c;font-weight:bold;letter-spacing:-1.750px;">ALL</div>
<div class="a" style="left:887px;top:846px;width:135px;height:5px;border-radius:3px;background:#44475a"></div>
<div class="a" style="left:887px;top:861px;width:135px;height:5px;border-radius:3px;background:#44475a"></div>
<div class="a" style="left:1032px;top:843px;width:59px;height:25px;background:#2a2a2d;border:1px solid #3a3a3d;border-radius:5px"></div>
<svg class="a" style="left:1045.5px;top:852px" width="10" height="9" viewBox="0 0 10 9"><path d="M0 0H9.5L4.75 8.5Z" fill="#f0f0f0"/></svg>
<div class="t s" style="left:1060.40px;top:850.52px;font-size:12.5px;color:#f0f0f0;font-weight:normal;letter-spacing:-1.750px;">Log</div>
<div class="a" style="left:826px;top:876px;width:29px;height:20px;background:#c093f7;border-radius:3px"></div>
<div class="t s" style="left:835.00px;top:881.21px;font-size:10.5px;color:#ffffff;font-weight:normal;letter-spacing:-0.500px;">All</div>
<div class="a" style="left:858px;top:876px;width:44px;height:20px;background:#c093f7;border-radius:3px"></div>
<div class="t s" style="left:867.25px;top:881.21px;font-size:10.5px;color:#ffffff;font-weight:normal;letter-spacing:-0.700px;">Errors</div>
<div class="a" style="left:905px;top:876px;width:41px;height:20px;background:#c093f7;border-radius:3px"></div>
<div class="t s" style="left:914.25px;top:881.21px;font-size:10.5px;color:#ffffff;font-weight:normal;letter-spacing:-0.833px;">Warn</div>
<div class="a" style="left:949px;top:876px;width:49px;height:20px;background:#c093f7;border-radius:3px"></div>
<div class="t s" style="left:958.50px;top:881.21px;font-size:10.5px;color:#ffffff;font-weight:normal;letter-spacing:-1.000px;">Results</div>
<div class="a" style="left:1001px;top:876px;width:40px;height:20px;background:#c093f7;border-radius:3px"></div>
<div class="t s" style="left:1010.00px;top:881.21px;font-size:10.5px;color:#ffffff;font-weight:normal;letter-spacing:-1.000px;">CMD</div>
<div class="a" style="left:1044.5px;top:876px;width:46.5px;height:20px;background:#c093f7;border-radius:3px"></div>
<div class="t s" style="left:1053.75px;top:881.21px;font-size:10.5px;color:#ffffff;font-weight:normal;letter-spacing:-0.400px;">Detect</div>
<div class="a" style="left:0;top:899px;width:1102px;height:1px;background:#333336"></div>
<div class="a" style="left:0;top:900px;width:1102px;height:154px;background:#0c0c0c"></div>
<div class="a" style="left:1095px;top:1036px;width:5px;height:17px;border-radius:3px;background:#1e1e1e"></div>
<div class="t" style="left:24.50px;top:899.67px;font-family:'Liberation Mono',monospace;font-size:11px;color:#a3dc9e;font-weight:normal;">Updated 1 MKV tag (video: 3.86Mbps)</div>
<div class="t" style="left:11.30px;top:917.67px;font-family:'Liberation Mono',monospace;font-size:11px;color:#74c0fc;font-weight:bold;">[9/9] Factorio - 2024-12-01 11-34-42 AM.mp4</div>
<div class="t" style="left:24.50px;top:934.67px;font-family:'Liberation Mono',monospace;font-size:11px;color:#a3dc9e;font-weight:normal;">Video: 27.44Mbps [hevc] 2498x1418 - VBR target 4Mbps peak 12.00Mbps</div>
<div class="t" style="left:24.50px;top:951.67px;font-family:'Liberation Mono',monospace;font-size:11px;color:#a3dc9e;font-weight:normal;">Audio 0 : aac @ 162kbps - encoding to ac3 162kbps</div>
<div class="t" style="left:22.30px;top:969.06px;font-family:'Liberation Mono',monospace;font-size:9.18px;color:#7a7a7a;font-weight:normal;">CMD: ffmpeg -err_detect ignore_err -probesize 100M -analyzeduration 100M -y -i C:\Users\Owner\Videos\Factorio - 2024-12-01 11-34-42 AM.mp4 -map 0:v:0 -map 0:a:0 -map 0:s? -c:v libx264 -preset s</div>
<div class="t" style="left:11.40px;top:983.06px;font-family:'Liberation Mono',monospace;font-size:9.18px;color:#7a7a7a;font-weight:normal;">low -b:v 4000000 -maxrate 12000000 -pix_fmt yuv420p -c:a:0 ac3 -b:a:0 162k -c:s copy -disposition:s:0 default C:\Users\Owner\Videos\output\Factorio - 2024-12-01 11-34-42 AM.mkv</div>
<div class="t" style="left:24.50px;top:998.67px;font-family:'Liberation Mono',monospace;font-size:11px;color:#a3dc9e;font-weight:normal;">ffmpeg PID: 18696</div>
<div class="t" style="left:24.50px;top:1015.67px;font-family:'Liberation Mono',monospace;font-size:11px;color:#a3dc9e;font-weight:normal;">Cancelled (batch cancel)</div>
<div class="t" style="left:11.40px;top:1033.67px;font-family:'Liberation Mono',monospace;font-size:11px;color:#50e27e;font-weight:normal;">Batch cancelled. Done: 7, Failed: 0, Skipped: 0. Duration: 00:01:04</div>
</div>
<div id="frame"></div>
</body></html>
